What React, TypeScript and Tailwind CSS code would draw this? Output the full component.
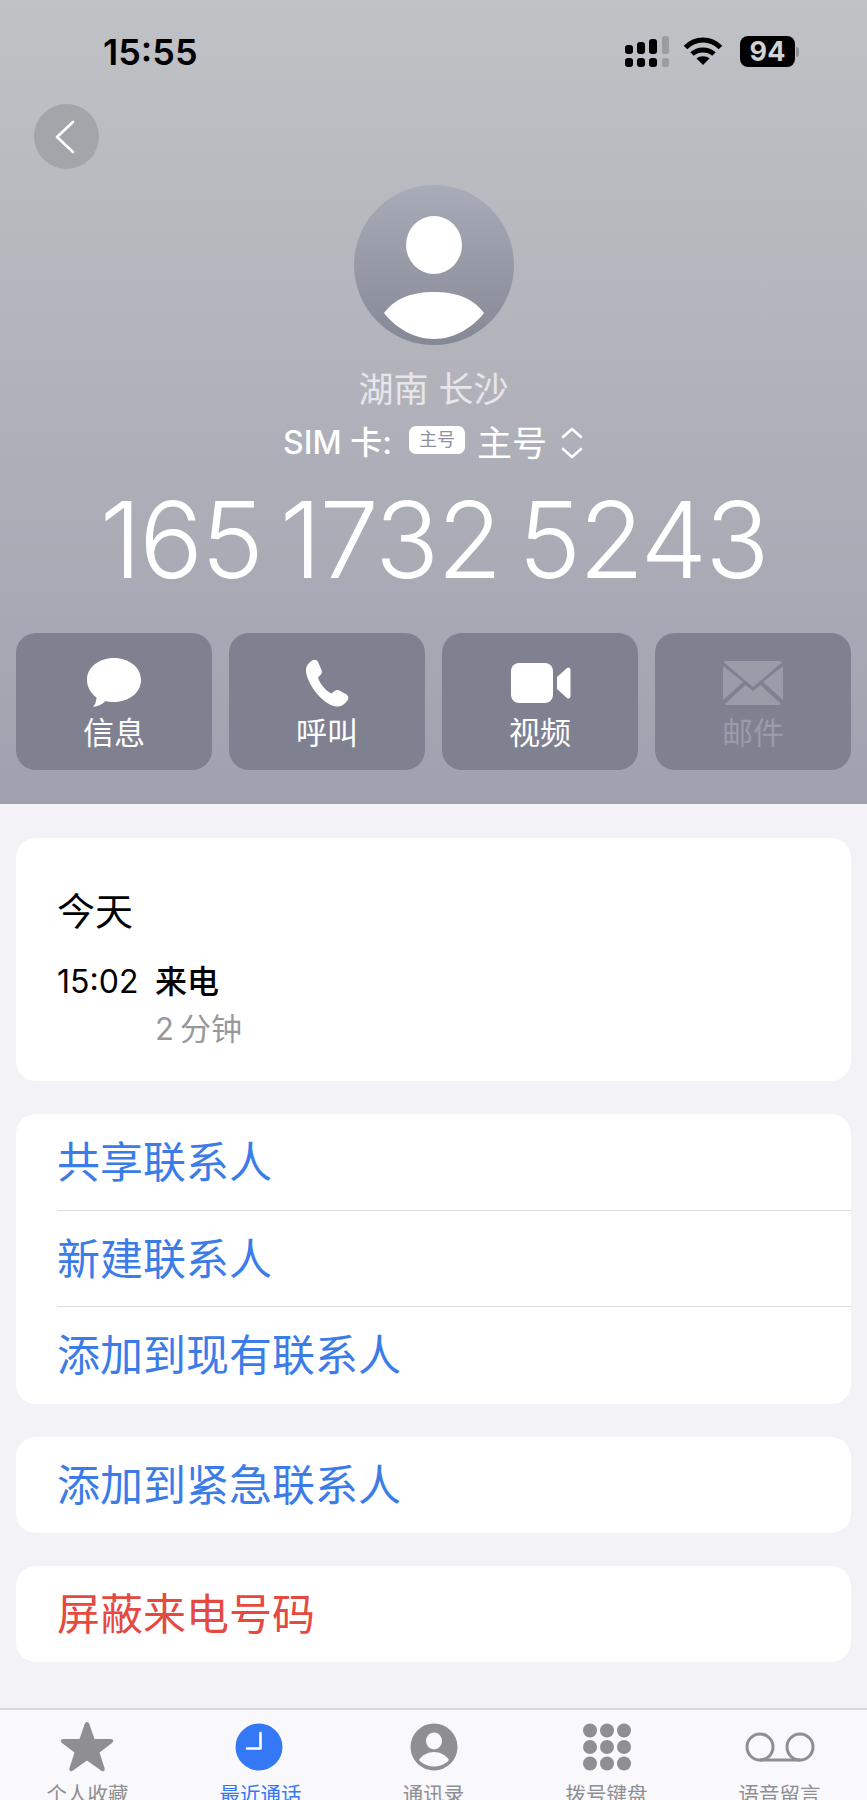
import type { ReactNode } from 'react';

const cjk = "font-['Inter','Noto_Sans_CJK_SC',sans-serif]";

function Signal() {
  return (
    <svg className="-mr-[3px]" width="44" height="32" viewBox="0 0 44 32">
      <g fill="#000">
        <rect x="0" y="9" width="8" height="9" rx="3" />
        <rect x="12" y="6" width="8" height="12" rx="3" />
        <rect x="24" y="3" width="8" height="15" rx="3" />
        <rect x="0" y="22" width="8" height="9" rx="3" />
        <rect x="12" y="22" width="8" height="9" rx="3" />
        <rect x="24" y="22" width="8" height="9" rx="3" />
      </g>
      <g fill="#9b9ca1">
        <rect x="37" y="0" width="7" height="18" rx="2.5" />
        <rect x="37" y="22" width="7" height="9" rx="2.5" />
      </g>
    </svg>
  );
}

function Wifi() {
  return (
    <svg width="40" height="30" viewBox="0 0 40 30" fill="none" stroke="#000" strokeWidth="5">
      <path d="M2.500 11.500C12.500 1.500 27.500 1.500 37.500 11.500" />
      <path d="M9 18C15 12.500 25 12.500 31 18" />
      <path d="M20 29l-6.500-6.500c3.500-3 9.500-3 13 0z" fill="#000" stroke="none" />
    </svg>
  );
}

function ActionButton({ icon, label, dim }: { icon: ReactNode; label: string; dim?: boolean }) {
  return (
    <div className="h-[137px] rounded-[20px] bg-[#7f8190] flex flex-col items-center pt-[24px]">
      <div className="h-[52px] flex items-center justify-center">{icon}</div>
      <div className={`mt-[4px] text-[31px] leading-[40px] ${dim ? 'text-[#9a9ca8]' : 'text-white'}`}>{label}</div>
    </div>
  );
}

function TabItem({ icon, label, active }: { icon: ReactNode; label: string; active?: boolean }) {
  return (
    <div className="flex flex-col items-center w-[173px]">
      <div className="h-[50px] shrink-0 flex items-center justify-center">{icon}</div>
      <div className={`mt-[9px] shrink-0 text-[20.500px] leading-[28px] whitespace-nowrap ${active ? 'text-[#3478f6]' : 'text-[#8e8e93]'}`}>{label}</div>
    </div>
  );
}

export default function App() {
  return (
    <div className={`w-[867px] h-[1800px] overflow-hidden flex flex-col bg-[#f2f2f7] ${cjk}`}>
      <header className="h-[804px] shrink-0 flex flex-col bg-gradient-to-b from-[#c1c2c6] to-[#9fa1ae]">
        <div className="h-[104px] shrink-0 flex justify-between pl-[103px] pr-[68px] pt-[30px]">
          <div className="text-[36px] leading-[44px] font-semibold text-black">15:55</div>
          <div className="flex items-start gap-[17px] pt-[6px]">
            <Signal />
            <Wifi />
            <div className="flex items-center">
              <div className="w-[55px] h-[31px] rounded-[8px] bg-black text-[#d2d2d6] text-[27px] leading-[31px] font-bold text-center">94</div>
              <div className="w-[3px] h-[10px] rounded-r-full bg-[#8f9096] ml-[1px]" />
            </div>
          </div>
        </div>
        <div className="pl-[34px]">
          <div className="w-[65px] h-[65px] rounded-full bg-[#a4a5aa] flex items-center justify-center pr-[4px]">
            <svg width="24" height="36" viewBox="0 0 24 36" fill="none" stroke="#fff" strokeWidth="2.600" strokeLinecap="round" strokeLinejoin="round">
              <path d="M20 3L4 18l16 15" />
            </svg>
          </div>
        </div>
        <div className="mt-[16px] self-center w-[160px] h-[160px] rounded-full overflow-hidden bg-gradient-to-b from-[#a8abb8] to-[#858995]">
          <svg width="160" height="160" viewBox="0 0 160 160">
            <ellipse cx="80" cy="60" rx="28" ry="29" fill="#fff" />
            <path d="M30 128C42 112 60 107 80 107s38 5 50 21c-12 15-30 26-50 26s-38-11-50-26z" fill="#fff" />
          </svg>
        </div>
        <div className="mt-[22px] text-center text-[35px] leading-[44px] text-[#e6e6ea]">湖南 长沙</div>
        <div className="mt-[10px] flex justify-center items-center text-white text-[32px] leading-[44px]">
          <span className="font-medium">SIM 卡:</span>
          <span className="ml-[17px] mb-[6px] w-[56px] h-[28px] rounded-[7px] bg-white text-[#8f919d] text-[18px] leading-[28px] text-center">主号</span>
          <span className="ml-[12px] text-[35px]">主号</span>
          <svg className="ml-[13px]" width="24" height="34" viewBox="0 0 24 34" fill="none" stroke="#fff" strokeWidth="2.600" strokeLinecap="round" strokeLinejoin="round">
            <path d="M3 11l9-8 9 8M3 23l9 8 9-8" />
          </svg>
        </div>
        <div className="mt-[21px] text-center text-[106px] leading-[108px] font-[350] text-white whitespace-nowrap tracking-[-2px] [word-spacing:-10px]">165 1732 5243</div>
        <div className="mt-[39px] grid grid-cols-4 gap-[17px] px-[16px]">
          <ActionButton
            label="信息"
            icon={
              <svg width="56" height="50" viewBox="0 0 56 50" fill="#fff">
                <path d="M28 0c15 0 27 9.500 27 22S43 44 28 44c-3 0-6-.4-8.500-1-3 3-7.500 5.500-12.500 6 2-2.500 3.500-6 3.500-9.500C5 35.500 1 29 1 22 1 9.500 13 0 28 0z" />
              </svg>
            }
          />
          <ActionButton
            label="呼叫"
            icon={
              <svg className="-ml-[2px]" width="46" height="48" viewBox="0 0 46 48" fill="#fff">
                <path d="M9 1.500c2-1.500 5-1 6 1.500l3.500 8c.8 2 .3 3.500-1 5l-2.500 2.500c1.500 6 8.500 14 13.500 16l3-2.500c1.500-1.200 3-1.500 5-.5l7 4c2 1.200 2.500 4 1 6-3 4-7 6.500-11 6C19 46 2 22 3 10c.3-3.500 3-6.500 6-8.500z" />
              </svg>
            }
          />
          <ActionButton
            label="视频"
            icon={
              <svg className="ml-[2px]" width="60" height="40" viewBox="0 0 60 40" fill="#fff">
                <rect x="0" y="0" width="42" height="40" rx="8" />
                <path d="M46 14l10-9c1.500-1.200 3.500-.2 3.500 2v26c0 2.200-2 3.200-3.500 2l-10-9z" />
              </svg>
            }
          />
          <ActionButton
            label="邮件"
            dim
            icon={
              <svg width="60" height="44" viewBox="0 0 60 44" fill="#9a9ca8">
                <path d="M1 1.500L30 26 59 1.500c-.5-.8-1-1.500-3-1.500H4C2 0 1.500.7 1 1.500z" />
                <path d="M0 5v34l20-18zM60 5v34L40 21zM2 43c.6.6 1.200 1 2 1h52c.8 0 1.400-.4 2-1L37.500 24 30 30l-7.500-6z" />
              </svg>
            }
          />
        </div>
      </header>

      <main className="flex-1 flex flex-col gap-[33px] px-[16px] pt-[34px]">
        <section className="h-[243px] rounded-[20px] bg-white pl-[41px] pt-[47px]">
          <div className="text-[38px] leading-[52px] text-black">今天</div>
          <div className="mt-[21px] flex">
            <div className="w-[98px] text-[32px] leading-[47px] text-black">15:02</div>
            <div>
              <div className="text-[32px] leading-[47px] font-medium text-black">来电</div>
              <div className="text-[31px] leading-[47px] text-[#98989c]">2<span className="ml-[6px]">分钟</span></div>
            </div>
          </div>
        </section>

        <section className="rounded-[20px] bg-white pl-[41px] text-[#3c7ce8] text-[43px]">
          <div className="h-[97px] leading-[96px] border-b border-[#dcdce0]">共享联系人</div>
          <div className="h-[96px] leading-[96px] border-b border-[#dcdce0]">新建联系人</div>
          <div className="h-[97px] leading-[96px]">添加到现有联系人</div>
        </section>

        <section className="h-[96px] rounded-[20px] bg-white pl-[41px] text-[#3c7ce8] text-[43px] leading-[96px]">添加到紧急联系人</section>

        <section className="h-[96px] rounded-[20px] bg-white pl-[41px] text-[#e5493f] text-[43px] leading-[96px]">屏蔽来电号码</section>
      </main>

      <nav className="h-[92px] shrink-0 flex justify-center border-t-2 border-[#d8d8dc] bg-[#f9f9fb] pt-[12px]">
        <TabItem
          label="个人收藏"
          icon={
            <svg className="-ml-[2px]" width="54" height="50" viewBox="0 0 54 50" fill="#8e8e93">
              <path d="M27 0c1.200 0 2 1 2.500 2.500L34.500 17h16c3 0 3.500 2.500 1.500 4L39.500 30.500l5 15.500c.8 3-1.500 4.200-3.500 2.500L27 38.500 13 48.500c-2 1.700-4.300.5-3.500-2.500l5-15.500L2 21c-2-1.500-1.500-4 1.500-4h16l5-14.500C25 1 25.800 0 27 0z" />
            </svg>
          }
        />
        <TabItem
          active
          label="最近通话"
          icon={
            <svg className="-ml-[4px]" width="48" height="48" viewBox="0 0 48 48">
              <circle cx="24" cy="24" r="23.500" fill="#3478f6" />
              <path d="M25.500 10v15.500H12" fill="none" stroke="#fff" strokeWidth="2.600" strokeLinecap="round" strokeLinejoin="round" />
            </svg>
          }
        />
        <TabItem
          label="通讯录"
          icon={
            <svg width="48" height="48" viewBox="0 0 48 48">
              <circle cx="24" cy="24" r="23.500" fill="#8e8e93" />
              <ellipse cx="24" cy="18" rx="8" ry="8.500" fill="#f9f9fb" />
              <path d="M9 37c3-5 9-8 15-8s12 3 15 8c-3.500 4-9 6.500-15 6.500S12.500 41 9 37z" fill="#f9f9fb" />
            </svg>
          }
        />
        <TabItem
          label="拨号键盘"
          icon={
            <svg width="50" height="48" viewBox="0 0 50 48" fill="#8e8e93">
              <circle cx="8" cy="7.500" r="7" />
              <circle cx="25" cy="7.500" r="7" />
              <circle cx="42" cy="7.500" r="7" />
              <circle cx="8" cy="24" r="7" />
              <circle cx="25" cy="24" r="7" />
              <circle cx="42" cy="24" r="7" />
              <circle cx="8" cy="40.500" r="7" />
              <circle cx="25" cy="40.500" r="7" />
              <circle cx="42" cy="40.500" r="7" />
            </svg>
          }
        />
        <TabItem
          label="语音留言"
          icon={
            <svg width="70" height="32" viewBox="0 0 70 32" fill="none" stroke="#8e8e93" strokeWidth="3">
              <circle cx="15" cy="16" r="13" />
              <circle cx="55" cy="16" r="13" />
              <path d="M15 29h40" />
            </svg>
          }
        />
      </nav>
    </div>
  );
}
